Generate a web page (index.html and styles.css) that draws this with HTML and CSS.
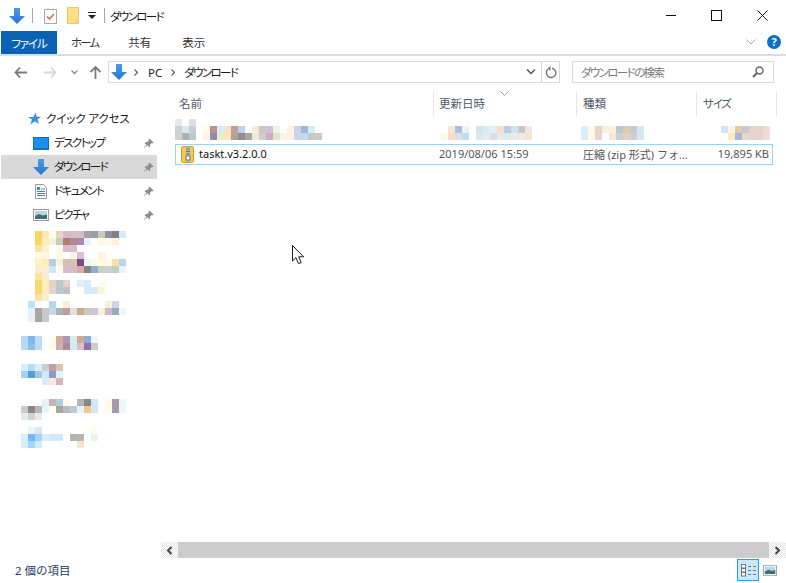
FILE: index.html
```html
<!DOCTYPE html>
<html lang="ja">
<head>
<meta charset="utf-8">
<title>ダウンロード</title>
<link rel="stylesheet" href="styles.css">
</head>
<body>
<svg class="defs" width="0" height="0">
  <defs>
    <linearGradient id="blue" x1="0" y1="0" x2="0" y2="1"><stop offset="0" stop-color="#4a9cea"/><stop offset="1" stop-color="#2477cf"/></linearGradient>
    <symbol id="arrow" viewBox="0 0 16 16"><path d="M5 0h6v8h5l-8 8-8-8h5z" fill="url(#blue)"/></symbol>
    <symbol id="pin" viewBox="0 0 12 12"><path d="M7 0.5l4.5 4.5-1 .7-.8-.3-2 2 .2 1.8-.9.8-2-2L1 11l-.3-.3 3-3.3-2-2 .8-.9 1.8.2 2-2-.3-.8z" fill="#8a8f94"/></symbol>
    <symbol id="pic" viewBox="0 0 16 12"><rect x=".5" y=".5" width="15" height="11" fill="#fff" stroke="#9a9a9a"/><rect x="2" y="2" width="12" height="8" fill="#b7d5ea"/><path d="M2 7l4-2 4 1.500 4-1V10H2z" fill="#3f6f6a"/></symbol>
  </defs>
</svg>
<div class="window">
  <header class="titlebar">
    <svg class="tb-arrow" width="16" height="16"><use href="#arrow"/></svg>
    <span class="tb-sep"></span>
    <svg class="tb-check" width="13" height="16" viewBox="0 0 13 16"><path d="M.5 1.500h12v14H.5z" fill="#fff" stroke="#a8a8a8"/><path d="M3 8.500l2.500 2.500L10 6" fill="none" stroke="#e0633a" stroke-width="1.500"/><path d="M3 .5h2v2H3zM8 .5h2v2H8z" fill="#bbb"/></svg>
    <svg class="tb-folder" width="13" height="17" viewBox="0 0 13 17"><path d="M.5.500h11v16H.5z" fill="#fbe08a" stroke="#e8c768"/><path d="M9 12h3v4.500H9z" fill="#f3d173"/></svg>
    <svg class="tb-drop" width="8" height="7" viewBox="0 0 8 7"><path d="M0 0h8v1H0zM0 3h8L4 7z" fill="#222"/></svg>
    <span class="tb-sep tb-sep2"></span>
    <span class="tb-title kana">ダウンロード</span>
    <div class="winctl">
      <span class="ctl"><svg width="11" height="11" viewBox="0 0 11 11"><path d="M1 5.500h10" stroke="#111"/></svg></span>
      <span class="ctl"><svg width="11" height="11" viewBox="0 0 11 11"><rect x=".5" y=".5" width="10" height="10" fill="none" stroke="#111"/></svg></span>
      <span class="ctl ctl-close"><svg width="11" height="11" viewBox="0 0 11 11"><path d="M.5.500l10 10M10.500.500l-10 10" stroke="#111"/></svg></span>
    </div>
  </header>
  <nav class="tabs">
    <span class="tab tab-file kana">ファイル</span>
    <span class="tab tab-home kana">ホーム</span>
    <span class="tab tab-share">共有</span>
    <span class="tab tab-view">表示</span>
    <svg class="rib-chev" width="10" height="6" viewBox="0 0 10 6"><path d="M.5.500L5 5 9.500.500" fill="none" stroke="#a8a8a8"/></svg>
    <span class="help">?</span>
  </nav>
  <div class="addr">
    <svg class="nav-btn back" width="13" height="11" viewBox="0 0 13 11"><path d="M6 .5L1.500 5.500 6 10.500M2 5.500h11" fill="none" stroke="#7a7a7a" stroke-width="1.800"/></svg>
    <svg class="nav-btn fwd" width="13" height="11" viewBox="0 0 13 11"><path d="M7 .5l4.500 5L7 10.500M11 5.500H0" fill="none" stroke="#d8d8d8" stroke-width="1.800"/></svg>
    <svg class="nav-btn hist" width="7" height="5" viewBox="0 0 7 5"><path d="M.5.500l3 3 3-3" fill="none" stroke="#8a8a8a" stroke-width="1.300"/></svg>
    <svg class="nav-btn up" width="11" height="13" viewBox="0 0 11 13"><path d="M.5 6l5-5 5 5M5.500 1.500V13" fill="none" stroke="#7a7a7a" stroke-width="1.800"/></svg>
    <div class="addrbox">
      <svg class="ab-arrow" width="16" height="16"><use href="#arrow"/></svg>
      <svg class="crumb crumb1" width="4" height="7" viewBox="0 0 4 7"><path d="M.5.500l3 3-3 3" fill="none" stroke="#555" stroke-width="1.100"/></svg>
      <span class="ab-pc">PC</span>
      <svg class="crumb crumb2" width="4" height="7" viewBox="0 0 4 7"><path d="M.5.500l3 3-3 3" fill="none" stroke="#555" stroke-width="1.100"/></svg>
      <span class="ab-dl kana">ダウンロード</span>
      <svg class="ab-drop" width="10" height="6" viewBox="0 0 10 6"><path d="M1 .5l4 4 4-4" fill="none" stroke="#555" stroke-width="1.500"/></svg>
      <span class="ab-refresh"><svg width="12" height="13" viewBox="0 0 12 13"><path d="M7 2.200A4.700 4.700 0 1 1 3 3.300" fill="none" stroke="#777" stroke-width="1.400"/><path d="M4.500 0v5L1.500 2.500z" fill="#777" transform="translate(1 0)"/></svg></span>
    </div>
    <div class="search">
      <span class="search-text kana">ダウンロードの検索</span>
      <svg width="12" height="12" viewBox="0 0 12 12"><circle cx="7.500" cy="4.500" r="3.500" fill="none" stroke="#666" stroke-width="1.500"/><path d="M5 7l-4 4" stroke="#666" stroke-width="2"/></svg>
    </div>
  </div>
  <main class="main">
    <aside class="navpane">
      <div class="navrow quick">
        <svg width="14" height="14" viewBox="0 0 14 14"><path d="M8.500.5l1.300 4.200H14l-3.400 2.700 1.300 4.600-4-2.800-4.700 3.200 1.800-4.800L1 5h5.500z" fill="#3b8edb"/></svg>
        <span class="quick-label kana">クイック アクセス</span>
      </div>
      <div class="navrow">
        <svg class="nav-ico" width="16" height="13" viewBox="0 0 16 13"><rect width="16" height="13" fill="#1b8fec"/><rect x="0" y="11" width="16" height="2" fill="#1e6fb8"/><rect x=".5" y=".5" width="15" height="12" fill="none" stroke="#0e6cb8"/></svg>
        <span class="navlabel kana">デスクトップ</span>
        <svg class="pin" width="11" height="11"><use href="#pin"/></svg>
      </div>
      <div class="navrow active">
        <svg class="nav-ico" width="16" height="16"><use href="#arrow"/></svg>
        <span class="navlabel kana">ダウンロード</span>
        <svg class="pin" width="11" height="11"><use href="#pin"/></svg>
      </div>
      <div class="navrow">
        <svg class="nav-ico" width="16" height="15" viewBox="0 0 16 15"><path d="M2.500.500h8l3 3v11h-11z" fill="#fff" stroke="#9a9a9a"/><path d="M4 3h3v3H4z" fill="#3a8fd0"/><path d="M8 5h4M4 7.500h8M4 9.500h8M4 11.500h8" stroke="#4a80b0"/></svg>
        <span class="navlabel kana">ドキュメント</span>
        <svg class="pin" width="11" height="11"><use href="#pin"/></svg>
      </div>
      <div class="navrow">
        <svg class="nav-ico" width="16" height="12"><use href="#pic"/></svg>
        <span class="navlabel kana">ピクチャ</span>
        <svg class="pin" width="11" height="11"><use href="#pin"/></svg>
      </div>
      <svg class="mosaic-nav" width="140" height="217" viewBox="0 231 140 217" shape-rendering="crispEdges">
        <rect x="35" y="231" width="7" height="7" fill="#f5d66b"/><rect x="42" y="231" width="7" height="7" fill="#fbeaaf"/><rect x="49" y="231" width="7" height="7" fill="#fffbf0"/><rect x="56" y="231" width="7" height="7" fill="#e6d3c0"/><rect x="63" y="231" width="21" height="7" fill="#d6bccb"/><rect x="84" y="231" width="7" height="7" fill="#a8a0a5"/><rect x="91" y="231" width="7" height="7" fill="#9d9ba8"/><rect x="98" y="231" width="7" height="7" fill="#c4ceba"/><rect x="105" y="231" width="7" height="7" fill="#8f8fa3"/><rect x="112" y="231" width="7" height="7" fill="#80808f"/><rect x="119" y="231" width="7" height="7" fill="#d6ebfa"/>
        <rect x="35" y="238" width="7" height="7" fill="#f5d66b"/><rect x="42" y="238" width="7" height="7" fill="#fbeebb"/><rect x="49" y="238" width="7" height="7" fill="#f6efdc"/><rect x="56" y="238" width="7" height="7" fill="#c4d0c4"/><rect x="63" y="238" width="7" height="7" fill="#b47c6e"/><rect x="70" y="238" width="7" height="7" fill="#b08c90"/><rect x="77" y="238" width="7" height="7" fill="#ab88b0"/><rect x="84" y="238" width="7" height="7" fill="#e9f3fb"/><rect x="91" y="238" width="7" height="7" fill="#fffdf5"/><rect x="98" y="238" width="14" height="7" fill="#fff9e6"/><rect x="112" y="238" width="7" height="7" fill="#fcf2de"/>
        <rect x="35" y="245" width="7" height="7" fill="#f9e4a3"/><rect x="42" y="245" width="7" height="7" fill="#fdf2d0"/><rect x="56" y="245" width="7" height="7" fill="#fffbe8"/><rect x="63" y="245" width="14" height="7" fill="#d8bccd"/>
        <rect x="35" y="252" width="7" height="7" fill="#fff9e6"/><rect x="42" y="252" width="7" height="7" fill="#fff6dc"/><rect x="56" y="252" width="7" height="7" fill="#fffbe8"/><rect x="70" y="252" width="7" height="7" fill="#fdf6e0"/><rect x="77" y="252" width="7" height="7" fill="#d8bed6"/><rect x="98" y="252" width="7" height="7" fill="#fcf4dc"/>
        <rect x="35" y="259" width="7" height="7" fill="#fdf2c0"/><rect x="42" y="259" width="7" height="7" fill="#fdeeb8"/><rect x="49" y="259" width="7" height="7" fill="#b9cde3"/><rect x="56" y="259" width="7" height="7" fill="#f9f2da"/><rect x="63" y="259" width="7" height="7" fill="#d9bcbc"/><rect x="70" y="259" width="7" height="7" fill="#d6c4b0"/><rect x="77" y="259" width="7" height="7" fill="#7f4a90"/><rect x="84" y="259" width="7" height="7" fill="#eaf5fc"/><rect x="91" y="259" width="21" height="7" fill="#fff9e6"/><rect x="112" y="259" width="7" height="7" fill="#f6e3ac"/><rect x="119" y="259" width="7" height="7" fill="#b9d6ee"/>
        <rect x="35" y="266" width="14" height="7" fill="#f8eed2"/><rect x="49" y="266" width="7" height="7" fill="#d0e6f5"/><rect x="56" y="266" width="7" height="7" fill="#fffbe8"/><rect x="63" y="266" width="14" height="7" fill="#d8bccd"/><rect x="77" y="266" width="7" height="7" fill="#dba9a9"/><rect x="84" y="266" width="7" height="7" fill="#858585"/><rect x="91" y="266" width="7" height="7" fill="#90aec8"/><rect x="98" y="266" width="7" height="7" fill="#c6cfc0"/><rect x="105" y="266" width="7" height="7" fill="#cfcfcf"/><rect x="112" y="266" width="7" height="7" fill="#c0cec4"/><rect x="119" y="266" width="7" height="7" fill="#e8f5fb"/>
        <rect x="35" y="273" width="7" height="7" fill="#f8e4a0"/><rect x="42" y="273" width="7" height="7" fill="#f8eed2"/>
        <rect x="35" y="280" width="7" height="7" fill="#f7d772"/><rect x="42" y="280" width="7" height="7" fill="#fbeebb"/><rect x="49" y="280" width="7" height="7" fill="#e6d2c2"/><rect x="56" y="280" width="7" height="7" fill="#bccac0"/><rect x="63" y="280" width="7" height="7" fill="#e6d0d0"/><rect x="77" y="280" width="7" height="7" fill="#e2eefa"/><rect x="84" y="280" width="7" height="7" fill="#d6ebf7"/><rect x="98" y="280" width="7" height="7" fill="#fffbee"/>
        <rect x="35" y="287" width="7" height="7" fill="#f7d772"/><rect x="42" y="287" width="7" height="7" fill="#fbeebb"/><rect x="49" y="287" width="7" height="7" fill="#e6d2d0"/><rect x="56" y="287" width="7" height="7" fill="#b5c8d8"/><rect x="63" y="287" width="7" height="7" fill="#c6c0c0"/><rect x="84" y="287" width="14" height="7" fill="#d6ebf7"/><rect x="98" y="287" width="7" height="7" fill="#fcf3d9"/>
        <rect x="35" y="294" width="7" height="7" fill="#f8e4a0"/><rect x="42" y="294" width="7" height="7" fill="#f8eed2"/>
        <rect x="28" y="301" width="7" height="7" fill="#b9e6fb"/><rect x="49" y="301" width="7" height="7" fill="#b9d8f0"/><rect x="63" y="301" width="7" height="7" fill="#f8efd8"/><rect x="105" y="301" width="7" height="7" fill="#f8efd8"/><rect x="112" y="301" width="7" height="7" fill="#ccd6e8"/>
        <rect x="28" y="308" width="7" height="14" fill="#e8eff5"/><rect x="35" y="308" width="7" height="14" fill="#a6a6a6"/><rect x="42" y="308" width="7" height="14" fill="#c8c8c8"/><rect x="49" y="308" width="7" height="7" fill="#ccd4e8"/><rect x="56" y="308" width="7" height="7" fill="#aab4b4"/><rect x="63" y="308" width="7" height="7" fill="#bf9ca0"/><rect x="70" y="308" width="7" height="7" fill="#d9e6d8"/><rect x="77" y="308" width="7" height="7" fill="#cfa98f"/><rect x="84" y="308" width="7" height="7" fill="#c9c9b4"/><rect x="91" y="308" width="7" height="7" fill="#cfc4d8"/><rect x="98" y="308" width="7" height="7" fill="#f8efd8"/><rect x="105" y="308" width="7" height="7" fill="#cbb8d0"/><rect x="112" y="308" width="7" height="7" fill="#9cacb8"/><rect x="119" y="308" width="7" height="7" fill="#eef6fb"/>
        <rect x="21" y="336" width="7" height="14" fill="#b8d8f4"/><rect x="28" y="336" width="7" height="7" fill="#7ab8f0"/><rect x="28" y="343" width="7" height="7" fill="#88c0f0"/><rect x="35" y="336" width="7" height="14" fill="#c0dcf4"/><rect x="49" y="336" width="7" height="14" fill="#fffcee"/><rect x="56" y="336" width="7" height="7" fill="#d0ac9c"/><rect x="63" y="336" width="7" height="7" fill="#ac98b0"/><rect x="70" y="336" width="7" height="7" fill="#d6ecf0"/><rect x="77" y="336" width="7" height="7" fill="#d4a890"/><rect x="84" y="336" width="7" height="7" fill="#90acd0"/><rect x="91" y="336" width="7" height="7" fill="#f0f6fb"/>
        <rect x="56" y="343" width="7" height="7" fill="#d4acb4"/><rect x="63" y="343" width="7" height="7" fill="#a88c9c"/><rect x="70" y="343" width="7" height="7" fill="#d0ecf0"/><rect x="77" y="343" width="7" height="7" fill="#dcc0d0"/><rect x="84" y="343" width="7" height="7" fill="#8c74ac"/><rect x="91" y="343" width="7" height="7" fill="#cccccc"/>
        <rect x="21" y="364" width="7" height="7" fill="#d8eefb"/><rect x="28" y="364" width="7" height="7" fill="#b0e0fb"/><rect x="35" y="364" width="7" height="7" fill="#d8eefb"/><rect x="42" y="364" width="7" height="7" fill="#c4d0d4"/><rect x="49" y="364" width="7" height="7" fill="#c0a0a0"/><rect x="56" y="364" width="7" height="7" fill="#d4c8b4"/>
        <rect x="21" y="371" width="7" height="7" fill="#a8d0f0"/><rect x="28" y="371" width="7" height="7" fill="#50a0d8"/><rect x="35" y="371" width="7" height="7" fill="#a8c8e0"/><rect x="42" y="371" width="7" height="7" fill="#d0ecfb"/><rect x="49" y="371" width="7" height="7" fill="#8c9cc8"/><rect x="56" y="371" width="7" height="7" fill="#e4f2fb"/>
        <rect x="42" y="378" width="7" height="7" fill="#d8eefb"/><rect x="49" y="378" width="7" height="7" fill="#fce8d8"/><rect x="56" y="378" width="7" height="7" fill="#d0b8c0"/>
        <rect x="42" y="399" width="7" height="7" fill="#e4f2fb"/><rect x="49" y="399" width="7" height="7" fill="#ccb0b8"/><rect x="56" y="399" width="7" height="7" fill="#a8d0ee"/><rect x="63" y="399" width="7" height="7" fill="#fffce8"/><rect x="77" y="399" width="7" height="7" fill="#b4b4b8"/><rect x="84" y="399" width="7" height="7" fill="#888888"/><rect x="91" y="399" width="7" height="14" fill="#d0e8f8"/><rect x="105" y="399" width="7" height="14" fill="#fefce8"/><rect x="112" y="399" width="7" height="14" fill="#a898ac"/><rect x="119" y="399" width="7" height="14" fill="#eef6fb"/>
        <rect x="21" y="406" width="7" height="7" fill="#cccccc"/><rect x="28" y="406" width="7" height="7" fill="#888888"/><rect x="35" y="406" width="7" height="7" fill="#b8b8b8"/><rect x="42" y="406" width="7" height="7" fill="#e8f4fb"/><rect x="49" y="406" width="7" height="7" fill="#fffff0"/><rect x="56" y="406" width="7" height="7" fill="#a8a894"/><rect x="63" y="406" width="7" height="7" fill="#c0b8c0"/><rect x="70" y="406" width="7" height="7" fill="#b8ccd8"/><rect x="77" y="406" width="7" height="7" fill="#e8f4fb"/><rect x="84" y="406" width="7" height="7" fill="#f4c88c"/>
        <rect x="21" y="413" width="7" height="7" fill="#e8e8e8"/><rect x="28" y="413" width="7" height="7" fill="#d0d4d8"/><rect x="35" y="413" width="7" height="7" fill="#e8e8e8"/>
        <rect x="28" y="427" width="7" height="7" fill="#e8f6fd"/><rect x="35" y="427" width="7" height="7" fill="#d8e8f4"/><rect x="91" y="427" width="7" height="7" fill="#fffdf0"/>
        <rect x="21" y="434" width="7" height="14" fill="#d8eefb"/><rect x="28" y="434" width="7" height="7" fill="#70b8f8"/><rect x="35" y="434" width="7" height="7" fill="#a8d4f8"/><rect x="42" y="434" width="7" height="7" fill="#e0ecf6"/><rect x="49" y="434" width="14" height="7" fill="#d0e8f8"/><rect x="70" y="434" width="7" height="7" fill="#b4b4b4"/><rect x="77" y="434" width="7" height="7" fill="#b4b8b0"/><rect x="91" y="434" width="7" height="7" fill="#e8f8e4"/>
        <rect x="28" y="441" width="7" height="7" fill="#a0d8fb"/><rect x="35" y="441" width="7" height="7" fill="#d0ecfb"/><rect x="77" y="441" width="7" height="7" fill="#f8e4cc"/>
      </svg>
    </aside>
    <section class="content">
      <div class="cols">
        <div class="col col-name"><span class="col-text">名前</span></div>
        <div class="col col-date"><span class="col-text">更新日時</span><svg class="sort" width="9" height="5" viewBox="0 0 9 5"><path d="M.5.500l4 4 4-4" fill="none" stroke="#a0a0a0"/></svg></div>
        <div class="col col-type"><span class="col-text">種類</span></div>
        <div class="col col-size"><span class="col-text kana">サイズ</span></div>
      </div>
      <svg class="mosaic-file" width="598" height="21" viewBox="175 119 598 21" shape-rendering="crispEdges">
        <rect x="175" y="119" width="7" height="7" fill="#e8e8e8"/><rect x="189" y="119" width="7" height="7" fill="#e0e0e0"/>
        <rect x="175" y="126" width="7" height="14" fill="#d0d0d0"/><rect x="182" y="126" width="7" height="7" fill="#d8e8f4"/><rect x="189" y="126" width="7" height="7" fill="#c4d0d8"/><rect x="203" y="126" width="7" height="7" fill="#fffbee"/><rect x="210" y="126" width="7" height="7" fill="#bf8f8f"/><rect x="217" y="126" width="7" height="7" fill="#d8ecf4"/><rect x="224" y="126" width="7" height="7" fill="#f4e4c8"/><rect x="231" y="126" width="7" height="7" fill="#c49a9a"/><rect x="238" y="126" width="7" height="7" fill="#b8d4ec"/><rect x="252" y="126" width="7" height="7" fill="#f8ecd8"/><rect x="259" y="126" width="7" height="7" fill="#c8c8c8"/><rect x="266" y="126" width="7" height="7" fill="#d8c0d4"/><rect x="273" y="126" width="7" height="7" fill="#eaf6ea"/><rect x="287" y="126" width="7" height="7" fill="#fbf4e0"/><rect x="294" y="126" width="7" height="7" fill="#ccd4e8"/><rect x="301" y="126" width="7" height="7" fill="#a8b4d4"/><rect x="308" y="126" width="7" height="7" fill="#d8ecf8"/>
        <rect x="182" y="133" width="7" height="7" fill="#a8b4a8"/><rect x="189" y="133" width="7" height="7" fill="#b8c8cc"/><rect x="203" y="133" width="7" height="7" fill="#fbf4e0"/><rect x="210" y="133" width="7" height="7" fill="#8c8cac"/><rect x="217" y="133" width="7" height="7" fill="#e8ecc8"/><rect x="224" y="133" width="7" height="7" fill="#f8e8b8"/><rect x="231" y="133" width="7" height="7" fill="#a8a890"/><rect x="238" y="133" width="7" height="7" fill="#9c8898"/><rect x="245" y="133" width="7" height="7" fill="#a8a8a0"/><rect x="252" y="133" width="7" height="7" fill="#f0e8d8"/><rect x="259" y="133" width="7" height="7" fill="#cfcfcf"/><rect x="266" y="133" width="7" height="7" fill="#d0a8c8"/><rect x="273" y="133" width="7" height="7" fill="#dce8c8"/><rect x="280" y="133" width="14" height="7" fill="#fbf4e0"/><rect x="294" y="133" width="7" height="7" fill="#ccd4e8"/><rect x="301" y="133" width="7" height="7" fill="#c0dcf0"/><rect x="308" y="133" width="14" height="7" fill="#c8c8c8"/>
        <rect x="448" y="126" width="7" height="7" fill="#f8e8d4"/><rect x="455" y="126" width="7" height="7" fill="#a8c0e0"/><rect x="462" y="126" width="7" height="7" fill="#eaf2f8"/><rect x="476" y="126" width="7" height="7" fill="#d8e4ec"/><rect x="483" y="126" width="7" height="7" fill="#d8ecf8"/><rect x="490" y="126" width="7" height="7" fill="#e4eef4"/><rect x="497" y="126" width="7" height="7" fill="#f4e0c8"/><rect x="504" y="126" width="7" height="7" fill="#b8cce8"/><rect x="511" y="126" width="7" height="7" fill="#d0e4f0"/><rect x="518" y="126" width="7" height="7" fill="#c8c8c8"/><rect x="525" y="126" width="7" height="7" fill="#f0e8e8"/>
        <rect x="441" y="133" width="7" height="7" fill="#fdf8ec"/><rect x="448" y="133" width="7" height="7" fill="#f4dcc8"/><rect x="455" y="133" width="7" height="7" fill="#e0e0e8"/><rect x="462" y="133" width="7" height="7" fill="#bcdcf8"/><rect x="476" y="133" width="7" height="7" fill="#dce8f4"/><rect x="483" y="133" width="7" height="7" fill="#e4ecf0"/><rect x="490" y="133" width="7" height="7" fill="#d8dce8"/><rect x="497" y="133" width="7" height="7" fill="#e8ece8"/><rect x="504" y="133" width="7" height="7" fill="#dce8ec"/><rect x="511" y="133" width="7" height="7" fill="#e8ecec"/><rect x="518" y="133" width="7" height="7" fill="#f0ece0"/><rect x="525" y="133" width="7" height="7" fill="#f8e4c8"/>
        <rect x="581" y="126" width="7" height="14" fill="#dcecf8"/><rect x="588" y="126" width="7" height="14" fill="#fdf8e8"/><rect x="595" y="126" width="7" height="14" fill="#e8d4cc"/><rect x="602" y="126" width="7" height="7" fill="#f8f0e0"/><rect x="609" y="126" width="7" height="7" fill="#fcf0dc"/><rect x="616" y="126" width="7" height="7" fill="#b8c8d8"/><rect x="623" y="126" width="7" height="7" fill="#e4c8b0"/><rect x="630" y="126" width="7" height="7" fill="#c4c8d8"/><rect x="637" y="126" width="7" height="14" fill="#d4e8f4"/>
        <rect x="609" y="133" width="7" height="7" fill="#f4e8d0"/><rect x="616" y="133" width="7" height="7" fill="#c8d0d8"/><rect x="623" y="133" width="7" height="7" fill="#e4d0c0"/><rect x="630" y="133" width="7" height="7" fill="#d0d0d4"/>
        <rect x="721" y="126" width="7" height="7" fill="#cfe4f4"/><rect x="728" y="126" width="7" height="7" fill="#fdf4e0"/><rect x="735" y="126" width="7" height="7" fill="#e4c8a8"/><rect x="742" y="126" width="7" height="7" fill="#c8c8d4"/><rect x="749" y="126" width="14" height="14" fill="#e4d4cc"/><rect x="763" y="126" width="7" height="14" fill="#eeddd8"/>
        <rect x="728" y="133" width="7" height="7" fill="#f8ecc0"/><rect x="735" y="133" width="7" height="7" fill="#a8b4d8"/><rect x="742" y="133" width="7" height="7" fill="#e8d8c8"/>
      </svg>
      <div class="filerow">
        <div class="f-name">
          <svg width="13" height="17" viewBox="0 0 13 17"><rect x=".5" y=".5" width="12" height="16" rx="1" fill="#f5c94e" stroke="#c9a02e"/><rect x="5" y="1" width="4" height="15" fill="#b8bcc2"/><path d="M5 3h4M5 5.500h4M5 8h4" stroke="#6f7378"/><rect x="5" y="10" width="4" height="4" fill="#fff" stroke="#6f7378"/></svg>
          <span class="f-label">taskt.v3.2.0.0</span>
        </div>
        <div class="f-date">2019/08/06 15:59</div>
        <div class="f-type">圧縮 (zip 形式) フォ...</div>
        <div class="f-size">19,895 KB</div>
      </div>
      <div class="spacer"></div>
      <div class="hscroll">
        <span class="sb-btn"><svg width="7" height="9" viewBox="0 0 7 9"><path d="M5.500 1L2 4.500 5.500 8" fill="none" stroke="#444" stroke-width="2"/></svg></span>
        <span class="sb-thumb"></span>
        <span class="sb-btn"><svg width="7" height="9" viewBox="0 0 7 9"><path d="M1.500 1L5 4.500 1.500 8" fill="none" stroke="#444" stroke-width="2"/></svg></span>
      </div>
    </section>
  </main>
  <footer class="status">
    <span class="count">2 個の項目</span>
    <div class="views">
      <span class="view-btn"><svg width="15" height="13" viewBox="0 0 15 13"><rect x=".5" y=".5" width="4" height="3.500" fill="#fff" stroke="#777"/><rect x=".5" y="4.500" width="4" height="3.500" fill="#fff" stroke="#777"/><rect x=".5" y="8.500" width="4" height="3.500" fill="#fff" stroke="#777"/><path d="M7 2.500h3M12 2.500h3M7 6.500h3M12 6.500h3M7 10.500h3M12 10.500h3" stroke="#777"/></svg></span>
      <svg class="view-large" width="14" height="11"><use href="#pic"/></svg>
    </div>
  </footer>
  <svg class="cursor" width="13" height="20" viewBox="0 0 13 20"><path d="M.5.500v15.500l3.500-3.300 2.500 6 2.700-1.200-2.500-5.700h5z" fill="#fff" stroke="#1a1a2a"/></svg>
</div>
</body>
</html>
```
FILE: styles.css
```css
* { box-sizing: border-box; }
html, body { margin: 0; padding: 0; background: #fff; }
body {
  width: 786px;
  height: 583px;
  overflow: hidden;
  font-family: "Noto Sans", "Noto Sans CJK JP", sans-serif;
  font-size: 11.500px;
  color: #1a1a1a;
}
svg { display: block; flex: none; }
.defs { position: absolute; }
.window { position: relative; display: flex; flex-direction: column; width: 786px; height: 583px; }
.kana { font-feature-settings: "palt"; letter-spacing: -1.600px; }

.titlebar { display: flex; align-items: center; height: 31px; padding-left: 9px; }
.tb-sep { width: 1px; height: 15px; background: #a8a8a8; margin-left: 7px; }
.tb-check { margin-left: 11px; }
.tb-folder { margin-left: 10px; }
.tb-drop { margin-left: 8px; }
.tb-sep2 { margin-left: 8px; }
.tb-title { margin-left: 5px; }
.winctl { display: flex; margin-left: auto; }
.ctl { display: flex; align-items: center; justify-content: center; width: 46px; height: 31px; }
.ctl-close { width: 47px; }

.tabs { display: flex; align-items: center; height: 25px; padding-bottom: 2px; border-bottom: 2px solid #dcdddf; position: relative; }
.tab { color: #333; }
.tab-file { display: flex; align-items: center; justify-content: center; margin-left: 1px; width: 56px; height: 23px; background: #0a62b4; color: #fff; align-self: flex-start; letter-spacing: -1.100px; }
.tab-home { margin-left: 14px; letter-spacing: -1.900px; }
.tab-share { margin-left: 30px; }
.tab-view { margin-left: 31px; }
.rib-chev { margin-left: auto; }
.help { display: flex; align-items: center; justify-content: center; width: 14px; height: 14px; margin: 0 5px 0 11px; border-radius: 50%; background: #0d6fc7; color: #fff; font-weight: 700; font-size: 11px; line-height: 1; }

.addr { display: flex; align-items: center; height: 30px; padding: 5px 0 3px 14px; }
.back { margin-right: 17px; }
.fwd { margin-right: 14px; }
.hist { margin-right: 12px; }
.up { margin-right: 7px; }
.addrbox { display: flex; align-items: center; width: 452px; height: 22px; border: 1px solid #d9d9d9; padding-left: 2px; }
.crumb1 { margin-left: 7px; }
.ab-pc { margin-left: 10px; }
.crumb2 { margin-left: 9px; }
.ab-dl { margin-left: 9px; }
.ab-drop { margin-left: auto; margin-right: 5px; }
.ab-refresh { display: flex; align-items: center; justify-content: center; width: 18px; height: 20px; border-left: 1px solid #d9d9d9; }
.search { display: flex; align-items: center; justify-content: space-between; width: 202px; height: 22px; margin-left: 12px; padding: 0 9px 0 8px; border: 1px solid #d9d9d9; }
.search-text { color: #7a7a7a; }

.main { display: flex; height: 473px; }
.navpane { width: 161px; flex: none; padding-top: 21px; }
.navrow { display: flex; align-items: center; height: 24px; margin: 0 4px 0 1px; padding-left: 32px; }
.nav-ico { margin-right: 5px; }
.navlabel { flex: 1; padding-bottom: 3px; }
.quick { padding-left: 26px; gap: 5px; }
.quick-label { padding-bottom: 3px; letter-spacing: -.100px; }
.active { background: #d9d9d9; }
.pin { margin-right: 3px; }
.mosaic-nav { margin-top: 4px; }

.content { display: flex; flex-direction: column; width: 625px; }
.cols { display: flex; height: 25px; margin: 5px 0 0 14px; color: #4d5a66; }
.col { display: flex; align-items: center; border-right: 1px solid #e5e5e5; position: relative; }
.col-text { padding-bottom: 2px; }
.col-name { width: 259px; padding-left: 4px; }
.col-date { width: 143px; padding-left: 5px; }
.col-type { width: 120px; padding-left: 6px; }
.col-size { width: 80px; padding-left: 6px; }
.col-size .kana { letter-spacing: -1.200px; }
.sort { position: absolute; left: 66px; top: 0; }
.mosaic-file { margin: 3px 0 0 14px; }
.filerow { display: flex; align-items: center; width: 598px; height: 21px; margin: 4px 0 0 14px; border: 1px solid #99d1ff; font-size: 11px; }
.f-name { display: flex; align-items: center; gap: 5px; width: 258px; padding-left: 5px; color: #111; }
.f-label { padding-bottom: 2px; }
.f-date { width: 144px; padding: 0 0 2px 5px; color: #555; }
.f-type { width: 120px; color: #555; padding: 0 0 2px 5px; }
.f-size { flex: 1; text-align: right; padding: 0 3px 2px 0; color: #555; }
.spacer { flex: 1; }
.hscroll { display: flex; height: 16px; margin-bottom: 1px; }
.sb-btn { display: flex; align-items: center; justify-content: center; width: 17px; background: repeating-conic-gradient(#e4e4e4 0 25%, #fff 0 50%) 0 0 / 2px 2px; }
.sb-thumb { flex: 1; background: #cdcdcd; }

.status { display: flex; align-items: center; justify-content: space-between; flex: 1; padding-left: 15px; padding-bottom: 2px; color: #1e3a5f; }
.views { display: flex; align-items: center; gap: 4px; padding-right: 9px; }
.view-btn { display: flex; align-items: center; justify-content: center; width: 22px; height: 22px; background: #cce8ff; border: 1px solid #2a9ae8; }
.cursor { position: absolute; left: 292px; top: 245px; }
```
